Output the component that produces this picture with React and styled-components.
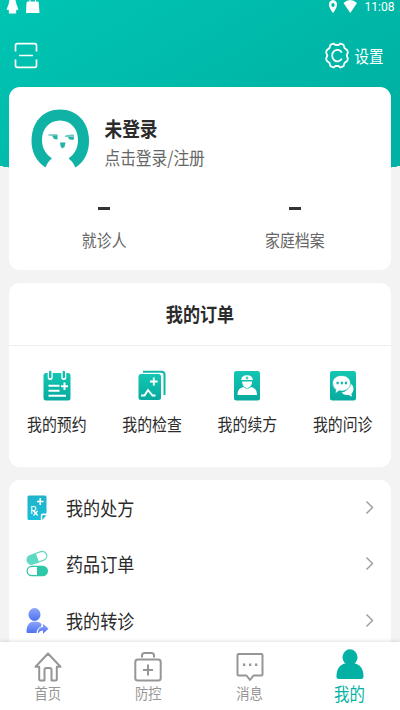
import React from 'react';
import styled, { createGlobalStyle } from 'styled-components';

const GlobalStyle = createGlobalStyle`
  * { box-sizing: border-box; }
  body { margin: 0; background: #f3f3f3; font-family: "Noto Sans CJK SC", sans-serif; }
`;

const Screen = styled.div`
  width: 400px;
  height: 710px;
  overflow: hidden;
  display: flex;
  flex-direction: column;
  background: #f3f3f3;
`;

const Content = styled.main`
  flex: 1;
  min-height: 0;
  overflow: hidden;
  display: flex;
  flex-direction: column;
  gap: 13px;
  padding: 0 9.4px;
  background:
    linear-gradient(to top right, #f3f3f3 50%, transparent 54%) 0 166px / 11px 2px no-repeat,
    linear-gradient(to top left, #f3f3f3 50%, transparent 54%) 100% 166px / 11px 2px no-repeat,
    linear-gradient(150deg, #00c5b3 0%, #00b2a3 80%) 0 0 / 100% 168px no-repeat;
`;

const Label = styled.span`
  display: block;
  white-space: nowrap;
  font-size: ${(p) => p.$size}px;
  line-height: 24px;
  font-weight: ${(p) => p.$weight || 400};
  color: ${(p) => p.$color || '#2b2b2b'};
  transform: scaleY(${(p) => p.$stretch || 1.15});
`;

const Header = styled.header`
  height: 74px;
  flex: none;
  display: flex;
  flex-direction: column;
`;

const StatusBar = styled.div`
  height: 13px;
  display: flex;
  justify-content: space-between;
  margin: 0 -4px 0 -3px;
`;

const StatusGroup = styled.div`
  display: flex;
  align-items: center;
  height: 13px;
`;

const Clock = styled.span`
  font: 12.1px/12px Roboto, sans-serif;
  color: #fff;
  transform: scaleY(1.1);
  margin: 1px 0 0 6px;
`;

const Toolbar = styled.div`
  display: flex;
  align-items: center;
  justify-content: space-between;
  height: 28px;
  margin-top: 28.5px;
  padding: 0 7px 0 4.6px;
`;

const Settings = styled.div`
  display: flex;
  align-items: center;
  gap: 6px;
`;

const Card = styled.section`
  flex: none;
  background: #fff;
  border-radius: 11px;
`;

const ProfileCard = styled(Card)`
  height: 183px;
`;

const User = styled.div`
  display: flex;
  padding: 22px 0 0 21.6px;
  gap: 14.5px;
  height: 103px;
`;

const UserText = styled.div`
  display: flex;
  flex-direction: column;
  padding-top: 7px;
  gap: 6px;
`;

const Stats = styled.div`
  display: grid;
  grid-template-columns: 1fr 1fr;
`;

const Stat = styled.div`
  display: flex;
  flex-direction: column;
  align-items: center;
  padding: 17px 1px 0 0;
  gap: 18px;
`;

const Dash = styled.span`
  width: 12px;
  height: 3px;
  background: #333;
`;

const OrderCard = styled(Card)`
  height: 184px;
`;

const OrderTitle = styled.div`
  height: 63px;
  display: flex;
  align-items: center;
  justify-content: center;
  border-bottom: 1px solid #eee;
`;

const OrderGrid = styled.div`
  display: grid;
  grid-template-columns: repeat(4, 1fr);
`;

const OrderItem = styled.div`
  display: flex;
  flex-direction: column;
  align-items: center;
  padding: 23.5px 0.5px 0 0;
  gap: 11px;
`;

const ListCard = styled(Card)`
  height: 240px;
`;

const Row = styled.div`
  display: flex;
  align-items: center;
  height: 56.3px;
  padding: 0 17px 0 16px;
`;

const RowText = styled.div`
  flex: 1;
  padding-left: 16.6px;
`;

const TabBar = styled.nav`
  flex: none;
  height: 68px;
  background: #fff;
  display: grid;
  grid-template-columns: 95.5px 105.5px 97px 103px;
  box-shadow: 0 -1px 4px rgba(0, 0, 0, 0.12);
  z-index: 1;
`;

const Tab = styled.div`
  display: flex;
  flex-direction: column;
  align-items: center;
  padding-top: 6px;

  & > span {
    margin-top: -1.5px;
  }
`;

const MineIcon = () => (
  <svg width="28" height="34" viewBox="0 0 28 34" fill="#02b1a3">
    <ellipse cx="14" cy="9.300" rx="7.500" ry="8" />
    <path d="M.5 28.500C.5 21 4 16.500 9 15.500h10c5 1 8.500 5.500 8.500 13 0 1.800-1 2.500-2.500 2.500H3C1.400 31 .5 30.300.5 28.500Z" />
  </svg>
);

const HomeIcon = () => (
  <svg width="28" height="34" viewBox="0 0 28 34" fill="none" stroke="#969696" strokeWidth="2" strokeLinejoin="round">
    <path d="M14 5.500 1.500 18.800h3.700V31.500q0 1 1 1h4.300V22q0-2 2-2h3q2 0 2 2v10.500h4.300q1 0 1-1V18.800h3.700Z" />
  </svg>
);

const KitIcon = () => (
  <svg width="28" height="34" viewBox="0 0 28 34" fill="none" stroke="#969696" strokeWidth="2">
    <rect x="1.300" y="11.500" width="25.400" height="21" rx="2.500" />
    <path d="M8 9.500V7.500Q8 5 10.500 5h7Q20 5 20 7.500V9.500M14 16.500v11M9 22h10" />
  </svg>
);

const MessageIcon = () => (
  <svg width="28" height="34" viewBox="0 0 28 34" fill="none" stroke="#969696" strokeWidth="2" strokeLinejoin="round">
    <path d="M2.500 6h23q1 0 1 1v19.500q0 1-1 1h-8L14 32 10.500 27.500h-8q-1 0-1-1V7q0-1 1-1Z" />
    <path d="M7 16.700h2.300M13 16.700h2.300M19 16.700h2.300" strokeWidth="2.500" />
  </svg>
);

const ScanIcon = () => (
  <svg width="24" height="27" viewBox="0 0 24 27" fill="none" stroke="#fff" strokeWidth="1.700">
    <path d="M1.500 9.500V3.500q0-1.800 1.800-1.800h17.400q1.800 0 1.800 1.800v6M1.500 17.500v6q0 1.800 1.800 1.800h17.400q1.800 0 1.800-1.800v-6M5 13.500h14" />
  </svg>
);

const GearIcon = () => (
  <svg width="24" height="27" viewBox="0 0 24 27" fill="none" stroke="#fff" strokeWidth="1.800" strokeLinejoin="round">
    <path d="M8.500 1.500 10.500 3h3l2-1.500 3 1.300 1 3.200 2.800 2.200.6 2.200L21.700 13.500l1.200 3.100-.6 2.200L19.500 21l-1 3.200-3 1.300-2-1.500h-3l-2 1.500-3-1.300-1-3.200-2.800-2.200-.6-2.200L2.300 13.500 1.100 10.400l.6-2.200L4.500 6l1-3.200Z" />
    <path d="M16.800 10.600A5.200 5.800 0 1 0 16.800 16.600" />
  </svg>
);

const Avatar = () => (
  <svg width="59" height="60" viewBox="0 0 59 60">
    <path d="M14.500 58.500C5 52 .5 43 .5 32 .5 13 12 .5 29 .5S58 13 58 32c0 11-4 20-13.500 26.500Z" fill="#10b2a5" />
    <path d="M29 11.500C18 11.500 11 20 11 31c0 8.500 4 14 10 18.500C17.500 52 16 54.500 14 60h31C43 54.500 41 52 37.500 49.500 43.500 45 47 39.500 47 31 47 20 40 11.500 29 11.500Z" fill="#fff" />
    <path d="M17.500 26h9M34 27.500q4.500-1.500 9-1" stroke="#6cc7bf" strokeWidth="1.600" fill="none" />
    <path d="M21 26.500h5.500v4l-3.500-.5ZM36.500 27.500H43l-.5 3.500-4-.5ZM29 33.500h5.500l-1 4.500-2.500 1.500q-2-2-2-6Z" fill="#25b3a8" />
  </svg>
);

const TealGradient = ({ id }) => (
  <defs>
    <linearGradient id={id} x1="0" y1="0" x2="0" y2="1">
      <stop offset="0" stopColor="#13c7b2" />
      <stop offset="1" stopColor="#08aa9f" />
    </linearGradient>
  </defs>
);

const CalendarIcon = () => (
  <svg width="28" height="31" viewBox="0 0 28 31">
    <TealGradient id="calendar" />
    <rect x=".5" y="3" width="27" height="27.500" rx="2.500" fill="url(#calendar)" />
    <path d="M7.200 1.500v6M20.800 1.500v6" stroke="#fff" strokeWidth="5" strokeLinecap="round" />
    <path d="M7.200 2v5M20.800 2v5" stroke="#12bcaa" strokeWidth="2.400" strokeLinecap="round" />
    <path d="M5.500 15.700h11M5.500 20.800h11M5.500 25.800h17.500M21.500 12.500v7.500M18 16.200h7" stroke="#fff" strokeWidth="2" />
  </svg>
);

const CheckIcon = () => (
  <svg width="28" height="31" viewBox="0 0 28 31">
    <TealGradient id="check" />
    <path d="M5 1.700h18.500q3 0 3 3V25" fill="none" stroke="#12b6a7" strokeWidth="2" />
    <rect x=".5" y="4" width="22.500" height="26" rx="2.500" fill="url(#check)" />
    <path d="M15.800 7.500v8M12 11.500h7.600M3 25.500h3.500L10 20l4.500 5.500h3" stroke="#fff" strokeWidth="1.900" fill="none" />
  </svg>
);

const DoctorIcon = () => (
  <svg width="28" height="31" viewBox="0 0 28 31">
    <TealGradient id="doctor" />
    <rect x="1" y="1" width="26" height="29.500" rx="2.500" fill="url(#doctor)" />
    <path d="M8.200 10Q8.300 5.500 14 5.300q5.700.2 5.800 4.700ZM9 11.500h10.200Q18.500 17.500 14 18 9.700 17.500 9 11.500ZM4.500 25c0-5 2-7 6-8 2 2 5.500 2 7.500 0 4 1 6 3 6 8Z" fill="#fff" />
    <path d="M14 6.500v3M12.700 8h2.600" stroke="#13b8a8" strokeWidth="1" />
  </svg>
);

const ChatIcon = () => (
  <svg width="28" height="31" viewBox="0 0 28 31">
    <TealGradient id="chat" />
    <rect x="1" y="1" width="26" height="29.500" rx="2.500" fill="url(#chat)" />
    <path d="M20 13q4.500 1.500 4.500 6-.2 3-2 4.500l.3 3.200-3-1.800q-5 .6-7.300-2.400 7-.5 7.500-9.500Z" fill="#fff" />
    <path d="M12.500 5.500c5.500 0 9 3.300 9 7.700s-3.500 7.800-9 7.800l-2.500-.2L6.500 23.500 6.700 19.500Q3.500 17 3.500 13.200C3.500 8.800 7 5.500 12.500 5.500Z" fill="#fff" stroke="#13b8a8" strokeWidth=".7" />
    <path d="M7.500 13h2.200M11.700 13h2.200M15.900 13h2.200" stroke="#13b8a8" strokeWidth="2.300" />
  </svg>
);

const RxText = styled.text`
  font: 11px "Noto Sans", sans-serif;
  fill: #fff;
`;

const PrescriptionIcon = () => (
  <svg width="24" height="28" viewBox="0 0 24 28">
    <defs>
      <linearGradient id="sheet" x1="0" y1="0" x2="0" y2="1">
        <stop offset="0" stopColor="#20b4c8" />
        <stop offset="1" stopColor="#18bfda" />
      </linearGradient>
    </defs>
    <path d="M4 1.500h16q1.500 0 1.500 1.500v16.500h-4q-1.700 0-1.700 1.700v4.800H4q-1.500 0-1.500-1.500V3Q2.500 1.500 4 1.500Z" fill="url(#sheet)" />
    <path d="M17.300 26v-4.800h4Z" fill="#14b5cd" />
    <path d="M15.200 4v7M12 7.500h6.500" stroke="#fff" strokeWidth="1.500" />
    <RxText x="5" y="20">R</RxText>
    <path d="m8.500 17 4.200 4.500M12.700 17l-4.200 4.500" stroke="#fff" strokeWidth="1.200" />
  </svg>
);

const PillsIcon = () => (
  <svg width="24" height="28" viewBox="0 0 24 28">
    <g transform="rotate(-20 12 8)">
      <rect x="1.200" y="2.700" width="21.600" height="10.200" rx="5.100" fill="#5fdac2" />
      <path d="M12.500 4h5.300a3.800 3.800 0 0 1 0 7.600h-5.300Z" fill="#fff" />
    </g>
    <rect x="1.500" y="15.700" width="21.500" height="10.600" rx="5.300" fill="#2ec7a7" />
    <path d="M12 17H6.800a4 4 0 0 0 0 8H12Z" fill="#fff" />
  </svg>
);

const ReferralIcon = () => (
  <svg width="24" height="28" viewBox="0 0 24 28">
    <defs>
      <linearGradient id="person" x1="0" y1="0" x2="0" y2="1">
        <stop offset="0" stopColor="#8ca5fb" />
        <stop offset="1" stopColor="#4f73f0" />
      </linearGradient>
    </defs>
    <g fill="url(#person)">
      <ellipse cx="9.500" cy="7.500" rx="6" ry="6.500" />
      <path d="M1.500 25c0-6 2-9.500 6-10.300h5q2.500.4 4 2.300l-.3 2.500Q12 21 11.500 26H3q-1.500 0-1.500-1Z" />
      <path d="M13 26.500q-.3-6.500 5-6.500v-3.300l5.500 5-5.500 5v-3.200q-3-.2-5 3Z" />
    </g>
  </svg>
);

const Chevron = () => (
  <svg width="9" height="14" viewBox="0 0 9 14" fill="none" stroke="#999" strokeWidth="1.400">
    <path d="m1.500 .5 6 6-6 6" />
  </svg>
);

const orders = [
  ['我的预约', CalendarIcon],
  ['我的检查', CheckIcon],
  ['我的续方', DoctorIcon],
  ['我的问诊', ChatIcon],
];

const services = [
  ['我的处方', PrescriptionIcon],
  ['药品订单', PillsIcon],
  ['我的转诊', ReferralIcon],
];

const tabs = [
  ['首页', HomeIcon],
  ['防控', KitIcon],
  ['消息', MessageIcon],
  ['我的', MineIcon],
];

export default function App() {
  return (
    <Screen>
      <GlobalStyle />
      <Content>
        <Header>
          <StatusBar>
            <StatusGroup>
              <svg width="35" height="14" viewBox="0 0 35 14" fill="#fff">
                <path d="M3.500 0h6q.7 4 2 7l1 3-2-.5-.5 2.500q1 1.500-.5 1.500h-6q-1.500 0-.5-1.500L2.500 9.500.5 10l1-3q1.500-3 2-7Z" />
                <path d="M20.500 2.500Q21 1.500 22 1.500h9.500q1 0 1.200 1l.8 10.500H20ZM23.500 0h1v3h-1ZM29 0h1v3h-1Z" />
              </svg>
            </StatusGroup>
            <StatusGroup>
              <svg width="30" height="14" viewBox="0 0 30 14" fill="#fff">
                <path fillRule="evenodd" d="M5 0Q9 .5 9 4.500 9 8 5 13 1 8 1 4.500 1 .5 5 0Zm0 3a1.700 2 0 1 0 0 4 1.700 2 0 1 0 0-4Z" />
                <path d="M15.500 3Q22 -3 29 3L22.300 13Z" />
              </svg>
              <Clock>11:08</Clock>
            </StatusGroup>
          </StatusBar>
          <Toolbar>
            <ScanIcon />
            <Settings>
              <GearIcon />
              <Label $size={14.5} $color="#fff" $stretch={1.17}>设置</Label>
            </Settings>
          </Toolbar>
        </Header>

        <ProfileCard>
          <User>
            <Avatar />
            <UserText>
              <Label $size={17.7} $weight={700}>未登录</Label>
              <Label $size={15.7} $color="#666">点击登录/注册</Label>
            </UserText>
          </User>
          <Stats>
            {['就诊人', '家庭档案'].map((name) => (
              <Stat key={name}>
                <Dash />
                <Label $size={14.9} $color="#666">{name}</Label>
              </Stat>
            ))}
          </Stats>
        </ProfileCard>

        <OrderCard>
          <OrderTitle>
            <Label $size={17.1} $weight={700}>我的订单</Label>
          </OrderTitle>
          <OrderGrid>
            {orders.map(([name, Icon]) => (
              <OrderItem key={name}>
                <Icon />
                <Label $size={14.9}>{name}</Label>
              </OrderItem>
            ))}
          </OrderGrid>
        </OrderCard>

        <ListCard>
          {services.map(([name, Icon]) => (
            <Row key={name}>
              <Icon />
              <RowText><Label $size={17.1}>{name}</Label></RowText>
              <Chevron />
            </Row>
          ))}
        </ListCard>
      </Content>

      <TabBar>
        {tabs.map(([name, Icon]) => (
          <Tab key={name}>
            <Icon />
            <Label $size={name === '我的' ? 15.4 : 13.3} $color={name === '我的' ? '#02b1a3' : '#969696'}>{name}</Label>
          </Tab>
        ))}
      </TabBar>
    </Screen>
  );
}
